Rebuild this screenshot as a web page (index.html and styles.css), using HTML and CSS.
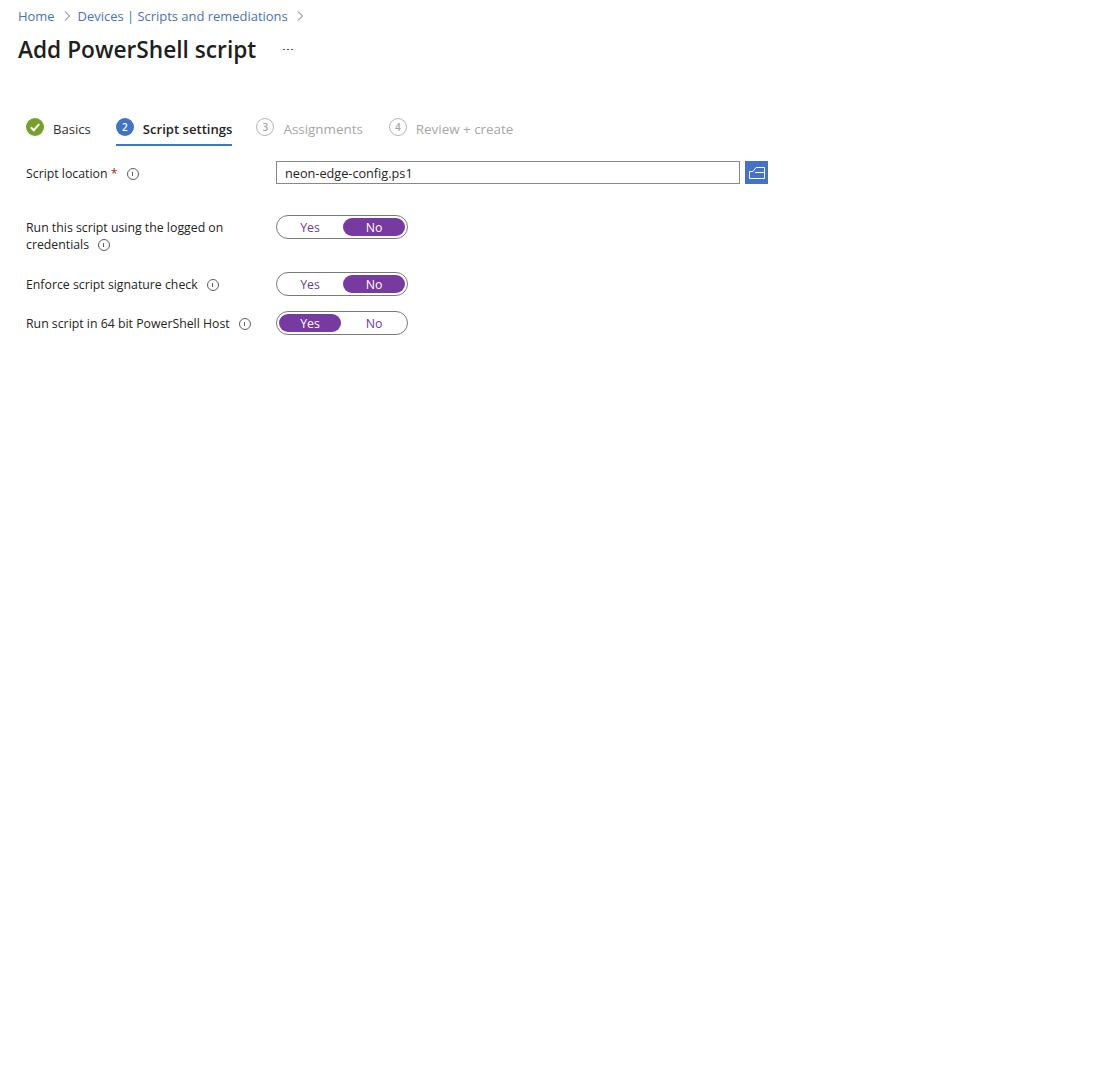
FILE: index.html
```html
<!DOCTYPE html>
<html>
<head>
    <title>Add PowerShell script</title>
    <link rel="stylesheet" href="styles.css">
</head>
<body>
    <nav class="breadcrumb">
        <a>Home</a>
        <svg class="chevron" viewBox="0 0 8 12"><path d="M2 1.5 6.5 6 2 10.5"/></svg>
        <a>Devices | Scripts and remediations</a>
        <svg class="chevron" viewBox="0 0 8 12"><path d="M2 1.5 6.5 6 2 10.5"/></svg>
    </nav>

    <div class="title-row">
        <h1>Add PowerShell script</h1>
        <span class="more">
            <i></i><i></i><i></i>
        </span>
    </div>

    <div class="tabs">
        <div class="tab">
            <svg class="step" viewBox="0 0 18 18">
                <circle cx="9" cy="9" r="9" fill="#76a02c"/>
                <path d="M4.8 9.3 7.8 12.2 13.2 6.2" fill="none" stroke="#fff" stroke-width="2"/>
            </svg>
            <span>Basics</span>
        </div>
        <div class="tab active">
            <span class="step num">2</span>
            <span>Script settings</span>
        </div>
        <div class="tab disabled">
            <span class="step num">3</span>
            <span>Assignments</span>
        </div>
        <div class="tab disabled">
            <span class="step num">4</span>
            <span>Review + create</span>
        </div>
    </div>

    <form class="form">
        <div class="row row-location">
            <div class="label">Script location <b class="req">*</b><span class="info"></span></div>
            <div class="file-field">
                <input class="file-input" type="text" value="neon-edge-config.ps1">
                <button class="browse" type="button">
                    <svg viewBox="0 0 16 14" width="16" height="14">
                        <path d="M.5 5.5h3.5l3-4h8.5v11H.5z M6 6.5h9.5" fill="none" stroke="#fff"/>
                    </svg>
                </button>
            </div>
        </div>

        <div class="row row-logged">
            <div class="label narrow">Run this script using the logged on credentials<span class="info"></span></div>
            <div class="toggle">
                <span>Yes</span>
                <span class="on">No</span>
            </div>
        </div>

        <div class="row row-signature">
            <div class="label">Enforce script signature check<span class="info"></span></div>
            <div class="toggle">
                <span>Yes</span>
                <span class="on">No</span>
            </div>
        </div>

        <div class="row row-host">
            <div class="label">Run script in 64 bit PowerShell Host<span class="info"></span></div>
            <div class="toggle">
                <span class="on">Yes</span>
                <span>No</span>
            </div>
        </div>
    </form>
</body>
</html>
```

FILE: styles.css
```css
body {
    margin: 0;
    height: 1090px;
    background: #fff;
    color: #252423;
    font-family: "Open Sans", "Noto Sans", sans-serif;
    font-size: 12.3px;
    overflow: hidden;
}

.breadcrumb {
    display: flex;
    align-items: center;
    height: 17px;
    padding: 7px 0 0 18px;
    color: #4a72b8;
    font-size: 12.95px;
}
.chevron {
    width: 8px;
    height: 12px;
    margin: 1px 7px 0 8px;
    fill: none;
    stroke: #6b6b6b;
}

.title-row {
    display: flex;
    align-items: center;
    height: 34px;
    margin-top: 8px;
    padding-left: 18px;
}
h1 {
    margin: 0;
    font-size: 22.7px;
    font-weight: 600;
    color: #201f1e;
}
.more {
    display: flex;
    gap: 2px;
    margin-left: 27px;
}
.more i {
    width: 2px;
    height: 1px;
    background: #555;
}

.tabs {
    display: flex;
    gap: 24px;
    height: 33px;
    margin-top: 47px;
    padding-left: 26px;
}
.tab {
    display: flex;
    align-items: center;
    gap: 9px;
    height: 31px;
    font-size: 13.1px;
    color: #323130;
}
.tab.active {
    margin-left: 1px;
    border-bottom: 2px solid #4472c4;
    font-weight: 600;
    color: #252423;
}
.tab.disabled {
    font-size: 13.4px;
    color: #a6a6a6;
}
.tab:last-child {
    margin-left: 2px;
}
.step {
    display: block;
    width: 18px;
    height: 18px;
    flex: none;
    box-sizing: border-box;
    margin-top: -3px;
}
.num {
    display: flex;
    align-items: center;
    justify-content: center;
    border-radius: 50%;
    font-size: 10px;
    font-weight: 600;
    background: #4472c4;
    color: #fff;
}
.disabled .num {
    background: none;
    border: 1px solid #b5b5b5;
    color: #a6a6a6;
}

.form {
    padding-left: 26px;
}
.row {
    display: flex;
    align-items: flex-start;
}
.row-location { margin-top: 15px; }
.row-logged { margin-top: 31px; }
.row-signature { margin-top: 19px; }
.row-host { margin-top: 15px; }

.label {
    width: 250px;
    flex: none;
    line-height: 17px;
    padding-top: 4px;
}
.label.narrow {
    width: 225px;
    margin-right: 25px;
}
.req {
    color: #8e2f2b;
    font-weight: 400;
}
.info {
    display: inline-block;
    width: 12px;
    height: 12px;
    margin-left: 9px;
    box-sizing: border-box;
    border: 1px solid #605e5c;
    border-radius: 50%;
    vertical-align: -2px;
    position: relative;
}
.info::after {
    content: "";
    position: absolute;
    left: 4px;
    top: 3px;
    width: 1px;
    height: 4px;
    background: #605e5c;
}

.file-field {
    display: flex;
    gap: 5px;
}
.file-input {
    width: 464px;
    height: 23px;
    box-sizing: border-box;
    margin: 0;
    padding: 0 8px;
    border: 1px solid #8a8886;
    border-radius: 0;
    font: inherit;
    font-size: 12.7px;
    color: #252423;
    outline: none;
}
.browse {
    display: flex;
    align-items: center;
    justify-content: center;
    width: 23px;
    height: 23px;
    padding: 0;
    border: none;
    background: #4472c4;
}

.toggle {
    display: flex;
    gap: 2px;
    width: 132px;
    height: 24px;
    box-sizing: border-box;
    padding: 2px;
    border: 1px solid #7a7a7a;
    border-radius: 12px;
    color: #6f3a9e;
}
.toggle span {
    flex: 1;
    display: flex;
    align-items: center;
    justify-content: center;
    height: 18px;
    border-radius: 9px;
}
.toggle .on {
    background: #773aa0;
    color: #fff;
}
```
